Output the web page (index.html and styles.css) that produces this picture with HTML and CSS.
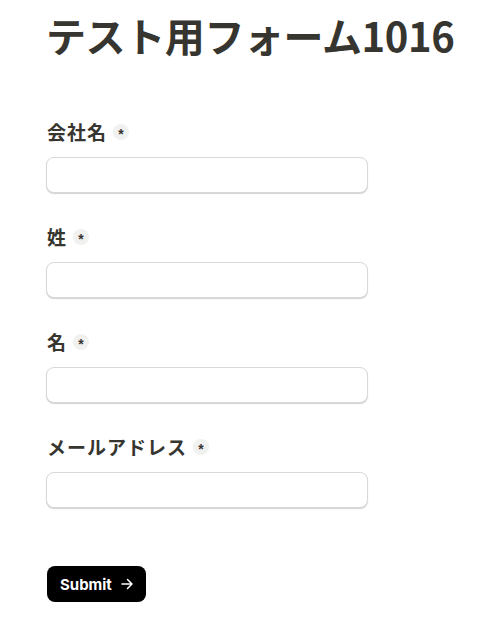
FILE: index.html
```html
<!DOCTYPE html>
<html lang="ja">
<head>
<meta charset="utf-8">
<link rel="stylesheet" href="styles.css">
</head>
<body>
<main class="page">
  <h1 class="title">テスト用フォーム1016</h1>
  <form class="form">
    <div class="field">
      <label class="label">会社名<span class="req">*</span></label>
      <input class="input" type="text">
    </div>
    <div class="field">
      <label class="label">姓<span class="req">*</span></label>
      <input class="input" type="text">
    </div>
    <div class="field">
      <label class="label">名<span class="req">*</span></label>
      <input class="input" type="text">
    </div>
    <div class="field">
      <label class="label">メールアドレス<span class="req">*</span></label>
      <input class="input" type="email">
    </div>
    <button class="submit" type="button">Submit
      <svg class="arrow" width="14" height="14" viewBox="0 0 14 14" fill="none" stroke="#fff" stroke-width="1.5" stroke-linecap="round" stroke-linejoin="round"><path d="M2 7h10M7.5 2.5L12 7l-4.5 4.5"/></svg>
    </button>
  </form>
</main>
</body>
</html>
```
FILE: styles.css
```css
* { box-sizing: border-box; }
body {
  margin: 0;
  background: #fff;
  font-family: "Noto Sans CJK JP", "Noto Sans", sans-serif;
  color: #37352f;
}
.page {
  padding: 11px 0 0 47px;
}
.title {
  margin: 0 0 0 -1px;
  font-size: 40px;
  line-height: 48px;
  font-weight: 700;
  letter-spacing: -0.01em;
  color: #37352f;
}
.form {
  margin-top: 61px;
  display: flex;
  flex-direction: column;
  align-items: flex-start;
}
.field {
  display: flex;
  flex-direction: column;
  margin-bottom: 32px;
}
.label {
  display: flex;
  align-items: center;
  height: 24px;
  margin-bottom: 13px;
  font-size: 19px;
  line-height: 24px;
  font-weight: 700;
  letter-spacing: 1px;
}
.req {
  display: inline-flex;
  align-items: center;
  justify-content: center;
  width: 16px;
  height: 16px;
  margin-left: 6px;
  border-radius: 50%;
  background: #f1f1ef;
  font-family: "Liberation Sans", sans-serif;
  font-size: 14px;
  font-weight: 700;
  line-height: 1;
  padding-top: 4px;
  letter-spacing: 0;
}
.input {
  width: 322px;
  height: 36px;
  margin: 0 0 0 -1px;
  border: 1px solid #d9d9d7;
  border-radius: 8px;
  box-shadow: 0 1px 1px rgba(0,0,0,0.18);
  background: #fff;
}
.submit {
  margin-top: 26px;
  display: inline-flex;
  align-items: center;
  gap: 8px;
  height: 36px;
  padding: 0 12px 0 13px;
  border: 0;
  border-radius: 8px;
  background: #000;
  color: #fff;
  font-family: "Inter", "Liberation Sans", sans-serif;
  font-size: 15px;
  font-weight: 700;
}
```
